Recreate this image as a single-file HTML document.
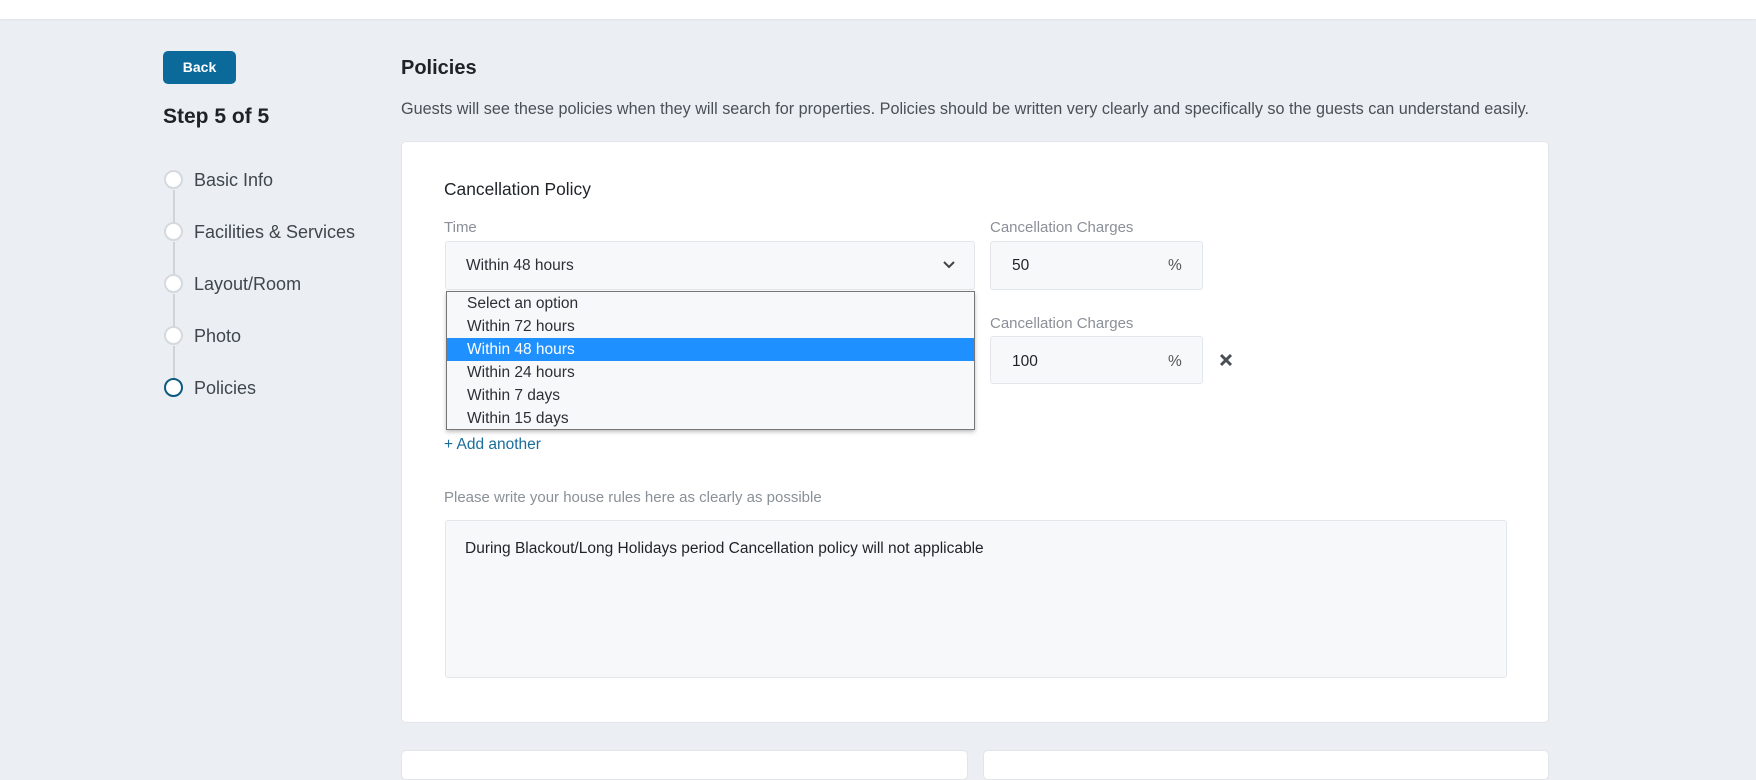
<!DOCTYPE html>
<html><head><meta charset="utf-8"><style>
*{box-sizing:border-box;margin:0;padding:0}
body{width:1756px;height:759px;overflow:hidden;background:#ebeff3;font-family:"Liberation Sans",sans-serif;position:relative;color:#1f2328}
.top{position:absolute;left:0;top:0;width:1756px;height:19px;background:#fff;box-shadow:0 1px 2px rgba(0,0,0,.05)}
.abs{position:absolute}
.back{left:163px;top:51px;width:73px;height:33px;background:#0b6a99;border-radius:5px;color:#fff;font-size:14px;font-weight:bold;text-align:center;line-height:33px}
.step{left:163px;top:105px;font-size:21px;font-weight:bold;color:#1d2227}
.circ{width:19px;height:19px;border-radius:50%;border:2px solid #d4d9de;background:#fff;left:164px}
.line{left:173px;width:2px;background:#cfd4d9;height:32px}
.nav{left:194px;font-size:18px;color:#3f464d}
.card{background:#fff;border:1px solid #e1e5ea;border-radius:5px}
.lbl{font-size:15px;color:#8a9097}
.inp{background:#f7f8fa;border:1px solid #e3e7eb;border-radius:3px}
.opt{height:23px;line-height:23px;padding-left:20px;font-size:15.5px;color:#2b3036}
</style></head><body>
<div class="top"></div>
<div class="abs back">Back</div>
<div class="abs step">Step 5 of 5</div>
<div class="abs circ" style="top:170px"></div><div class="abs line" style="top:190px"></div>
<div class="abs circ" style="top:222px"></div><div class="abs line" style="top:242px"></div>
<div class="abs circ" style="top:274px"></div><div class="abs line" style="top:294px"></div>
<div class="abs circ" style="top:326px"></div><div class="abs line" style="top:346px"></div>
<div class="abs circ" style="top:378px;border-color:#0d5a80"></div>
<div class="abs nav" style="top:170px">Basic Info</div>
<div class="abs nav" style="top:222px">Facilities &amp; Services</div>
<div class="abs nav" style="top:274px">Layout/Room</div>
<div class="abs nav" style="top:326px">Photo</div>
<div class="abs nav" style="top:378px">Policies</div>

<div class="abs" style="left:401px;top:57px;font-size:20px;font-weight:bold">Policies</div>
<div class="abs" style="left:401px;top:100px;font-size:16.2px;color:#4a5057">Guests will see these policies when they will search for properties. Policies should be written very clearly and specifically so the guests can understand easily.</div>

<div class="abs card" style="left:401px;top:141px;width:1148px;height:582px"></div>
<div class="abs" style="left:444px;top:179px;font-size:17.4px;color:#1f2328">Cancellation Policy</div>
<div class="abs lbl" style="left:444px;top:219px">Time</div>
<div class="abs lbl" style="left:990px;top:219px">Cancellation Charges</div>
<div class="abs inp" style="left:445px;top:241px;width:530px;height:49px"></div>
<div class="abs" style="left:466px;top:257px;font-size:15.5px;color:#2b3036">Within 48 hours</div>
<svg class="abs" style="left:942px;top:260px" width="14" height="10" viewBox="0 0 14 10"><path d="M2 2l5 5 5-5" fill="none" stroke="#444" stroke-width="2"/></svg>
<div class="abs inp" style="left:990px;top:241px;width:213px;height:49px"></div>
<div class="abs" style="left:1012px;top:257px;font-size:15.5px">50</div>
<div class="abs" style="left:1168px;top:257px;font-size:15.5px;color:#555">%</div>

<div class="abs lbl" style="left:990px;top:315px">Cancellation Charges</div>
<div class="abs inp" style="left:990px;top:336px;width:213px;height:48px"></div>
<div class="abs" style="left:1012px;top:353px;font-size:15.5px">100</div>
<div class="abs" style="left:1168px;top:353px;font-size:15.5px;color:#555">%</div>
<svg class="abs" style="left:1219px;top:353px" width="14" height="14" viewBox="0 0 14 14"><path d="M2 2l10 10M12 2L2 12" stroke="#4a4f55" stroke-width="3"/></svg>

<div class="abs" style="left:446px;top:291px;width:529px;height:139px;background:#f7f8fa;border:1px solid #767676;box-shadow:0 2px 4px rgba(0,0,0,.25)">
<div class="opt">Select an option</div>
<div class="opt">Within 72 hours</div>
<div class="opt" style="background:#1e90ff;color:#fff">Within 48 hours</div>
<div class="opt">Within 24 hours</div>
<div class="opt">Within 7 days</div>
<div class="opt">Within 15 days</div>
</div>

<div class="abs" style="left:444px;top:436px;font-size:15.5px;color:#1b6d9c">+ Add another</div>
<div class="abs lbl" style="left:444px;top:489px">Please write your house rules here as clearly as possible</div>
<div class="abs inp" style="left:445px;top:520px;width:1062px;height:158px"></div>
<div class="abs" style="left:465px;top:540px;font-size:15.5px;color:#1f2328">During Blackout/Long Holidays period Cancellation policy will not applicable</div>

<div class="abs card" style="left:401px;top:750px;width:567px;height:30px"></div>
<div class="abs card" style="left:983px;top:750px;width:566px;height:30px"></div>
</body></html>
